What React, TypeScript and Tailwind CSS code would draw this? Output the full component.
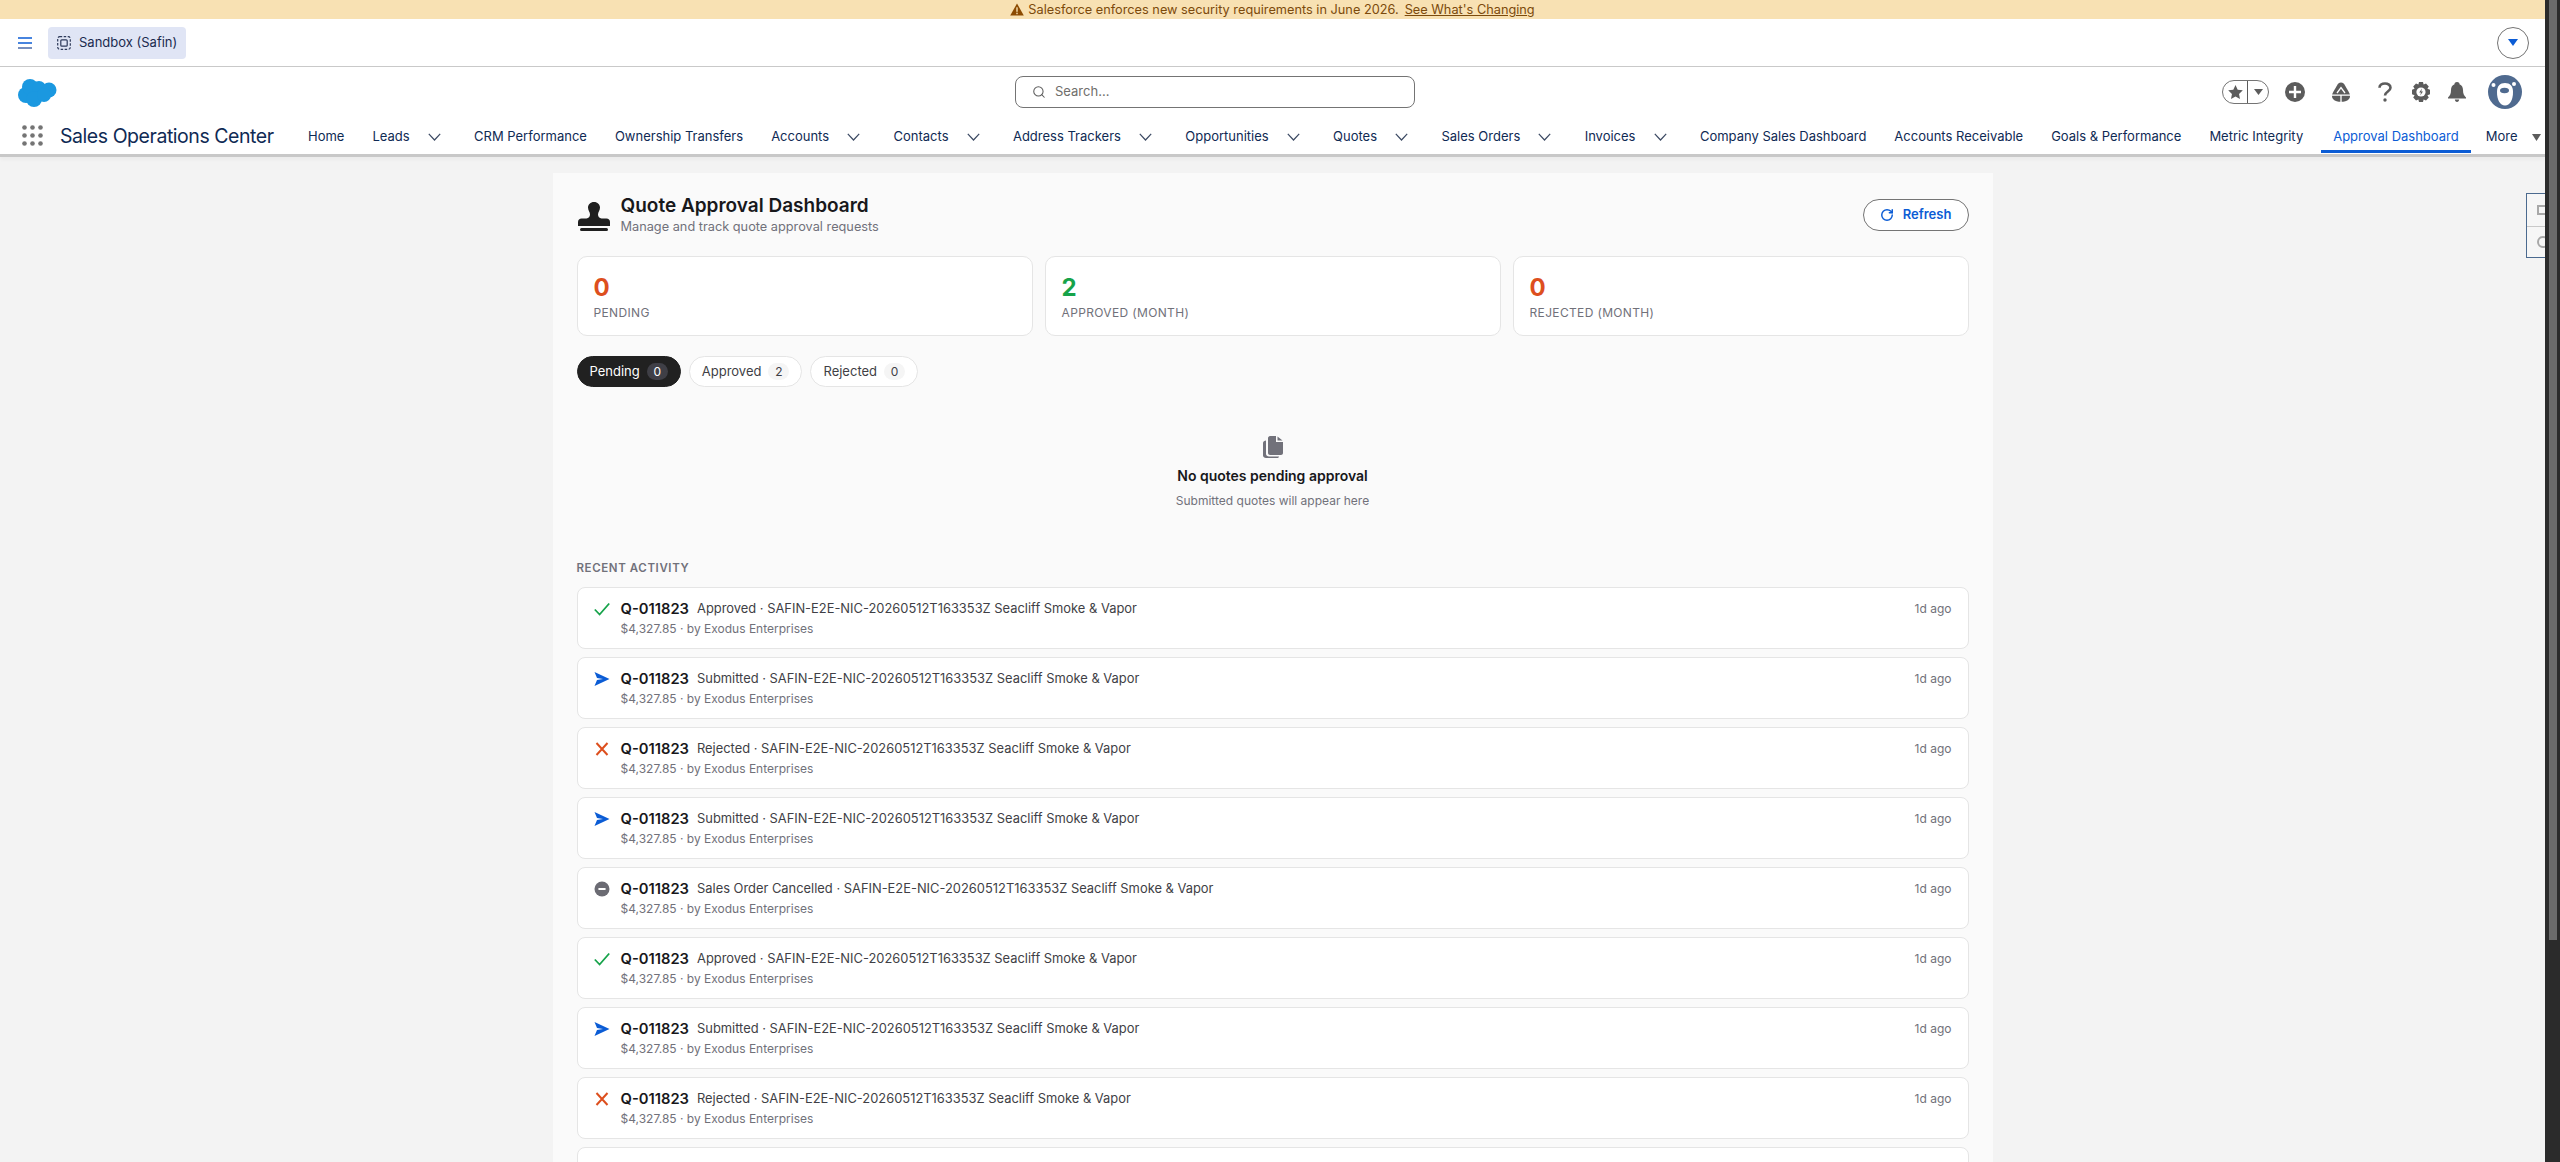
import { RotateCw, Search } from "lucide-react";

const navItems = [
  { label: "Home" },
  { label: "Leads", menu: true },
  { label: "CRM Performance" },
  { label: "Ownership Transfers" },
  { label: "Accounts", menu: true },
  { label: "Contacts", menu: true },
  { label: "Address Trackers", menu: true },
  { label: "Opportunities", menu: true },
  { label: "Quotes", menu: true },
  { label: "Sales Orders", menu: true },
  { label: "Invoices", menu: true },
  { label: "Company Sales Dashboard" },
  { label: "Accounts Receivable" },
  { label: "Goals & Performance" },
  { label: "Metric Integrity" },
];

const stats = [
  { value: "0", label: "Pending", color: "text-[#dd4f1e]" },
  { value: "2", label: "Approved (Month)", color: "text-[#16a34a]" },
  { value: "0", label: "Rejected (Month)", color: "text-[#dd4f1e]" },
];

const tabs = [
  { label: "Pending", count: 0, active: true },
  { label: "Approved", count: 2 },
  { label: "Rejected", count: 0 },
];

const activity = ["Approved", "Submitted", "Rejected", "Submitted", "Sales Order Cancelled", "Approved", "Submitted", "Rejected"];

function Chevron() {
  return (
    <svg width="13" height="8" viewBox="0 0 13 8" className="ml-[18px] mr-[5.4px]" fill="none" stroke="#3c4a63" strokeWidth="1.2">
      <path d="M0.8 0.8 L6.5 7 L12.2 0.8" />
    </svg>
  );
}

function StatusIcon({ status }: { status: string }) {
  if (status === "Approved") {
    return (
      <svg width="16" height="16" viewBox="0 0 16 16" fill="none" stroke="#16a34a" strokeWidth="1.8">
        <path d="M0.8 8.500 L5.600 13.500 L15.200 2.500" />
      </svg>
    );
  }
  if (status === "Submitted") {
    return (
      <svg width="16" height="16" viewBox="0 0 16 16" fill="#0b5cd5">
        <path d="M0.500 1 L15.500 8 L0.500 15 L3 8.900 L9 8 L3 7.100 Z" />
      </svg>
    );
  }
  if (status === "Rejected") {
    return (
      <svg width="16" height="16" viewBox="0 0 16 16" fill="none" stroke="#dd4f1e" strokeWidth="2">
        <path d="M2.500 2 L13.500 14 M13.500 2 L2.500 14" />
      </svg>
    );
  }
  return (
    <svg width="16" height="16" viewBox="0 0 16 16">
      <circle cx="8" cy="8" r="7.500" fill="#6b6b73" />
      <rect x="4.200" y="7" width="7.600" height="2" rx="1" fill="#fff" />
    </svg>
  );
}

function ActivityRow({ status }: { status: string }) {
  return (
    <div className="flex h-[62px] shrink-0 items-start rounded-lg border border-[#e5e5e5] bg-white pl-4 pr-4 pt-3">
      <div className="mr-[11px] flex h-[18px] w-4 items-center"><StatusIcon status={status} /></div>
      <div className="flex-1">
        <div className="flex h-[18px] items-center">
          <span className="text-[14.75px] font-semibold text-[#18181b]">Q-011823</span>
          <span className="ml-2 text-[12.9px] text-[#3f3f46]">{status} · SAFIN-E2E-NIC-20260512T163353Z Seacliff Smoke &amp; Vapor</span>
        </div>
        <div className="mt-[2px] flex h-[18px] items-center text-[12px] text-[#71717a]">$4,327.85 · by Exodus Enterprises</div>
      </div>
      <span className="flex h-[18px] items-center text-[12px] text-[#71717a]">1d ago</span>
    </div>
  );
}

function TopBars() {
  return (
    <header className="relative z-10 bg-white shadow-[0_3px_3px_rgba(0,0,0,0.03)]">
      <div className="flex h-[19px] items-center justify-center bg-[#f8e1b3] text-[12.75px] text-[#7c4a0c]">
        <svg width="14" height="13" viewBox="0 0 14 13" className="mr-[4px]">
          <path d="M7 0.500 L13.800 12.500 H0.200 Z" fill="#8c4b02" />
          <rect x="6.300" y="4.300" width="1.400" height="4.500" fill="#f8e1b3" />
          <rect x="6.300" y="9.700" width="1.400" height="1.500" fill="#f8e1b3" />
        </svg>
        <span>Salesforce enforces new security requirements in June 2026.</span>
        <a className="ml-[6px] underline">See What's Changing</a>
      </div>

      <div className="flex h-[48px] items-center border-b border-[#c9c9c9] pl-[18px] pr-4">
        <svg width="14" height="12" viewBox="0 0 14 12" fill="none" stroke="#0b5cd5" strokeWidth="1.500">
          <path d="M0 1 H14 M0 6 H14" />
          <path d="M0 11 H14" stroke="#4a6aa8" />
        </svg>
        <div className="ml-4 flex h-8 items-center rounded bg-[#e0e5f5] pl-[9px] pr-[9px] text-[13px] text-[#1b2b4f]">
          <svg width="14" height="14" viewBox="0 0 14 14" fill="none" stroke="#2e3a5a" strokeWidth="1.200">
            <rect x="0.700" y="0.700" width="12.600" height="12.600" rx="2" strokeDasharray="2.500 1.500" />
            <rect x="3.800" y="3.800" width="6.400" height="6.400" rx="1" />
          </svg>
          <span className="ml-2">Sandbox (Safin)</span>
        </div>
        <div className="ml-auto flex h-8 w-8 items-center justify-center rounded-full border border-[#747474]">
          <svg width="10" height="7" viewBox="0 0 10 7"><path d="M0 0 H10 L5 7 Z" fill="#0b5cd5" /></svg>
        </div>
      </div>

      <div className="flex h-[50px] items-center pl-[17px]">
        <svg width="40" height="29" viewBox="0 0 40 29" fill="#1b98e0">
          <circle cx="9" cy="17" r="8" />
          <circle cx="13" cy="9" r="8" />
          <circle cx="22" cy="10" r="7" />
          <circle cx="32" cy="12" r="7.500" />
          <circle cx="17" cy="21" r="8" />
          <circle cx="27" cy="17" r="7" />
        </svg>
        <div className="ml-[958px] flex h-8 w-[400px] items-center rounded-lg border border-[#747474] pl-[16px] text-[13px] text-[#706e6b]">
          <Search size={14} strokeWidth={1.8} color="#5c5c5c" />
          <span className="ml-[9px]">Search...</span>
        </div>
        <div className="ml-auto flex items-center pr-[23px]">
          <div className="flex h-6 w-[47px] items-center rounded-full border border-[#747474]">
            <div className="flex h-full w-[25px] items-center justify-center border-r border-[#5c5c5c]">
              <svg width="15" height="14" viewBox="0 0 24 23" fill="#5c5c5c"><path d="M12 0 L15.600 7.800 L24 8.800 L17.800 14.600 L19.400 23 L12 18.800 L4.600 23 L6.200 14.600 L0 8.800 L8.400 7.800 Z" /></svg>
            </div>
            <div className="flex flex-1 justify-center">
              <svg width="9" height="6" viewBox="0 0 9 6"><path d="M0 0 H9 L4.500 6 Z" fill="#5c5c5c" /></svg>
            </div>
          </div>
          <svg width="20" height="20" viewBox="0 0 20 20" className="ml-4">
            <circle cx="10" cy="10" r="10" fill="#5c5c5c" />
            <path d="M10 4 V16 M4 10 H16" stroke="#fff" strokeWidth="2.400" />
          </svg>
          <svg width="20" height="20" viewBox="0 0 20 20" className="ml-[26px]">
            <path d="M10 0.500 C12 0.500 13 1.800 14 3.500 L17.500 9.500 C19.500 13 19.500 15 18 17 C16 19.500 13 19.800 10 19.800 C7 19.800 4 19.500 2 17 C0.500 15 0.500 13 2.500 9.500 L6 3.500 C7 1.800 8 0.500 10 0.500 Z" fill="#5c5c5c" />
            <path d="M0.500 13.200 H19.500 M6 11 L10 5.500 L14 11 M10 13.200 V20" fill="none" stroke="#fff" strokeWidth="1.300" />
          </svg>
          <svg width="16" height="20" viewBox="0 0 16 20" className="ml-[26px]" fill="none">
            <path d="M2.500 5.800 C2.500 3 5 1.500 8 1.500 C11 1.500 13.500 3 13.500 5.800 C13.500 9.500 8 9.500 8 13.500" stroke="#5c5c5c" strokeWidth="2.600" />
            <circle cx="8" cy="18" r="1.700" fill="#5c5c5c" />
          </svg>
          <svg width="18" height="20" viewBox="0 0 18 20" className="ml-[19px]">
            <path d="M7 0 H11 L11.600 2.600 L14 1.500 L16.800 4.500 L15.400 6.800 L18 7.800 V12.200 L15.400 13.200 L16.800 15.500 L14 18.500 L11.600 17.400 L11 20 H7 L6.400 17.400 L4 18.500 L1.200 15.500 L2.600 13.200 L0 12.200 V7.800 L2.600 6.800 L1.200 4.500 L4 1.500 L6.400 2.600 Z" fill="#5c5c5c" />
            <circle cx="9" cy="10" r="4.600" fill="#fff" />
            <path d="M10 6.500 L7.200 10.600 H9 L8.200 13.500 L11 9.400 H9.200 Z" fill="#5c5c5c" />
          </svg>
          <svg width="18" height="20" viewBox="0 0 18 20" className="ml-[18px]" fill="#5c5c5c">
            <path d="M9 0 C11 0 11.500 1 11.500 2.200 C14 3 15 5.500 15 8 C15 12 16 13.500 18 15.500 V16.500 H0 V15.500 C2 13.500 3 12 3 8 C3 5.500 4 3 6.500 2.200 C6.500 1 7 0 9 0 Z" />
            <path d="M6.800 17.500 H11.200 C11 19 10.200 20 9 20 C7.800 20 7 19 6.800 17.500 Z" />
          </svg>
          <svg width="34" height="34" viewBox="0 0 34 34" className="ml-[22px]">
            <circle cx="17" cy="17" r="17" fill="#4f6a8f" />
            <circle cx="5.500" cy="10" r="2" fill="#fff" />
            <circle cx="26" cy="9" r="2" fill="#fff" />
            <path d="M17 8 C22 8 25 11 25 17 C25 25 22 30.500 17 30.500 C12 30.500 9 25 9 17 C9 11 12 8 17 8 Z" fill="#fff" />
            <ellipse cx="16.500" cy="15.500" rx="4.500" ry="2.800" fill="#4f6a8f" />
          </svg>
        </div>
      </div>

      <nav className="flex h-[40px] items-start border-b-[3px] border-[#c8c8c8] pl-[22px] text-[13px] text-[#0f2a54]">
        <svg width="21" height="21" viewBox="0 0 21 21" className="mt-[8px] shrink-0" fill="#747474">
          {[2.500, 10.500, 18.500].map((y) => [2.500, 10.500, 18.500].map((x) => <circle key={`${x}-${y}`} cx={x} cy={y} r="2.300" />))}
        </svg>
        <span className="ml-[17px] mr-[20.4px] flex h-[36px] shrink-0 items-center pt-[4px] text-[19.5px] tracking-[-0.45px]">Sales Operations Center</span>
        {navItems.map((item) => (
          <div key={item.label} className="flex h-[36px] shrink-0 items-center px-[14px] pt-[4px]">
            <span>{item.label}</span>
            {item.menu && <Chevron />}
          </div>
        ))}
        <div className="ml-[4px] flex h-[36px] shrink-0 items-center border-b-[3px] border-[#0b5cd5] px-[12px] pt-[7px] text-[#0b5cd5]">Approval Dashboard</div>
        <div className="ml-[15px] flex h-[36px] shrink-0 items-center pt-[4px]">
          <span>More</span>
          <svg width="9" height="7" viewBox="0 0 9 7" className="ml-[14px]"><path d="M0 0 H9 L4.500 7 Z" fill="#5c5c5c" /></svg>
        </div>
      </nav>
    </header>
  );
}

function Dashboard() {
  return (
    <section className="mx-auto mt-4 w-[1440px] bg-[#fafafa] px-6 pt-6">
      <div className="flex h-9 items-center justify-between">
        <div className="flex items-center">
          <svg width="34" height="30" viewBox="0 0 34 30" className="mt-[3px]" fill="#1f1f1f">
            <path d="M17 0c-3.600 0-6 2.500-6 5.600 0 3 2 4.600 2 7 0 2.400-1.400 3.400-3.500 4H4.500C2.500 16.600 1 18 1 20v4h32v-4c0-2-1.500-3.400-3.500-3.400h-5C22.400 16 21 15 21 12.600c0-2.400 2-4 2-7C23 2.500 20.600 0 17 0z" />
            <rect x="3" y="26" width="28" height="3" rx="1.500" />
          </svg>
          <div className="ml-[10px]">
            <h1 className="text-[19px] font-semibold leading-[22px] text-[#18181b]">Quote Approval Dashboard</h1>
            <p className="mt-[1px] text-[12.75px] leading-[18px] text-[#71717a]">Manage and track quote approval requests</p>
          </div>
        </div>
        <button className="flex h-8 w-[106px] items-center justify-center rounded-full border border-[#747474] bg-white text-[13px] font-semibold text-[#0b5cd5]">
          <RotateCw size={14} strokeWidth={2.500} />
          <span className="ml-[9px]">Refresh</span>
        </button>
      </div>

      <div className="mt-[23px] grid grid-cols-3 gap-3">
        {stats.map((stat) => (
          <div key={stat.label} className="h-20 rounded-[10px] border border-[#e5e5e5] bg-white pl-4 pt-[15px]">
            <div className={`text-[24px] font-bold leading-[32px] ${stat.color}`}>{stat.value}</div>
            <div className="mt-[1px] text-[12px] uppercase leading-[16px] tracking-[0.35px] text-[#71717a]">{stat.label}</div>
          </div>
        ))}
      </div>

      <div className="mt-5 flex gap-2">
        {tabs.map((tab) => (
          <div
            key={tab.label}
            className={tab.active
              ? "flex h-[31px] items-center rounded-full border border-[#212121] bg-[#212121] pl-3 pr-3 text-[13px] text-white"
              : "flex h-[31px] items-center rounded-full border border-[#e5e5e5] bg-white pl-3 pr-[12px] text-[13px] text-[#3f3f46]"}
          >
            <span>{tab.label}</span>
            <span className={tab.active
              ? "ml-[7px] flex h-[17px] w-[21px] items-center justify-center rounded-full bg-[#3f3f46] text-[12px]"
              : "ml-[7px] flex h-[17px] w-[21px] items-center justify-center rounded-full bg-[#f5f5f5] text-[12px]"}>{tab.count}</span>
          </div>
        ))}
      </div>

      <div className="flex flex-col items-center pt-[49px]">
        <svg width="21" height="22" viewBox="0 0 21 22" fill="#71717a">
          <path d="M8 0 H14 V6 H21 V17 C21 18 20 19 19 19 H8 C7 19 6 18 6 17 V2 C6 1 7 0 8 0 Z" />
          <path d="M15.500 0.500 L20.500 4.500 H15.500 Z" />
          <path d="M4 4.500 V18 C4 19.500 5.500 20.500 7 20.500 H17 C16.800 21.500 16 22 15 22 H4 C2.500 22 1 21 1 19.500 V7 C1 5.500 2.500 4.500 4 4.500 Z" />
        </svg>
        <div className="mt-[8px] text-[14px] font-semibold leading-[20px] text-[#18181b]">No quotes pending approval</div>
        <div className="mt-[5px] text-[12px] leading-[20px] text-[#71717a]">Submitted quotes will appear here</div>
      </div>

      <h2 className="mt-[50px] text-[11.5px] font-semibold uppercase leading-[14px] tracking-[0.6px] text-[#71717a]">Recent Activity</h2>
      <div className="mt-3 flex flex-col gap-2">
        {activity.map((status, i) => <ActivityRow key={i} status={status} />)}
        <div className="h-[62px] shrink-0 rounded-lg border border-[#e5e5e5] bg-white" />
      </div>
    </section>
  );
}

export default function App() {
  return (
    <div className="relative flex h-screen overflow-hidden bg-[#f3f3f3] font-['Inter',sans-serif]">
      <div className="min-w-0 flex-1 overflow-hidden">
        <TopBars />
        <Dashboard />
      </div>

      {/* docked utility tab on the window edge */}
      <div className="absolute left-[2526px] top-[193px] h-[65px] w-[19px] overflow-hidden border border-r-0 border-[#4b6a8f] bg-[#f6f6f6]">
        <div className="flex h-[33px] items-center border-b border-[#c9c9c9] pl-[10px]">
          <span className="block h-[10px] w-[10px] shrink-0 border-2 border-[#a8a8a8]" />
        </div>
        <div className="flex h-[30px] items-center pl-[10px]">
          <span className="block h-[12px] w-[12px] shrink-0 rounded-full border-2 border-[#a8a8a8]" />
        </div>
      </div>

      <div className="w-[15px] shrink-0 bg-[#2b2b2b] px-[4px]">
        <div className="h-[940px] w-[8px] bg-[#6b6b6b]" />
      </div>
    </div>
  );
}
